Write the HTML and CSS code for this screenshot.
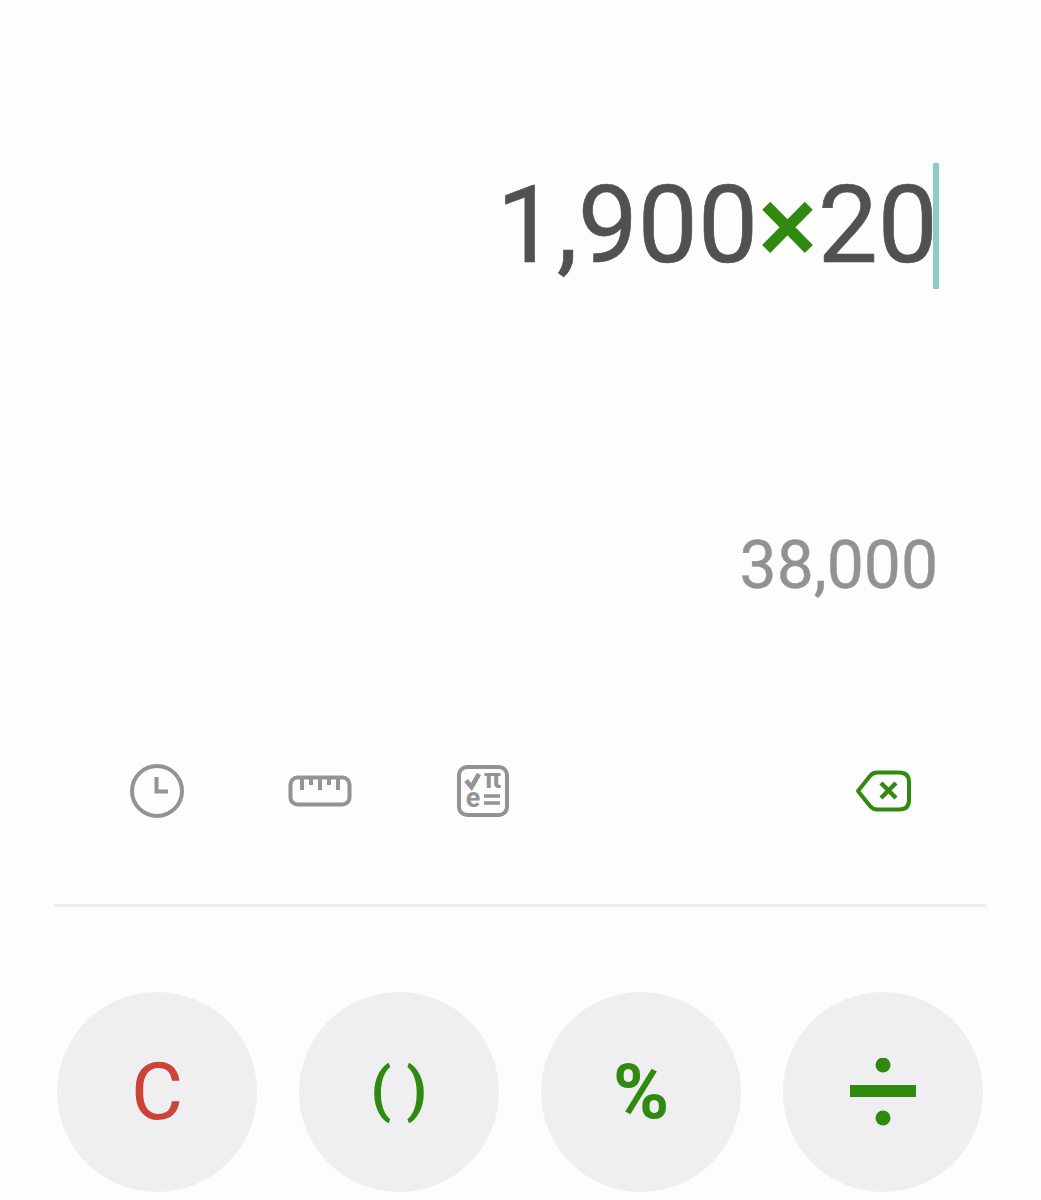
FILE: index.html
```html
<!DOCTYPE html>
<html lang="en">
<head>
    <meta charset="UTF-8">
    <meta name="viewport" content="width=device-width, initial-scale=1.0">
    <title>Calculator</title>
    <link rel="stylesheet" href="styles.css">
</head>
<body>
    <div id="calculator">
        <div id="expression">
            <span>1,900</span><span class="times">×</span><span>20</span><span class="caret"></span>
        </div>
        <div id="result">38,000</div>

        <div id="tools">
            <button class="tool">
                <svg width="56" height="56" viewBox="0 0 56 56" fill="none" stroke="#939393" stroke-width="4">
                    <circle cx="28" cy="28" r="25"/>
                    <path d="M27.500 14V28.500H39"/>
                </svg>
            </button>
            <button class="tool">
                <svg width="64" height="32" viewBox="0 0 64 32" fill="none" stroke="#939393" stroke-width="4">
                    <rect x="2.500" y="2.500" width="59" height="27" rx="7"/>
                    <path d="M14 3V15M23 3V10M32 3V15M41 3V10M50 3V15"/>
                </svg>
            </button>
            <button class="tool">
                <svg width="52" height="64" viewBox="0 -6 52 64" fill="none" stroke="#939393" stroke-width="4">
                    <rect x="2" y="2" width="48" height="48" rx="8"/>
                    <path d="M9 15.500L14.500 22L22 9" stroke-width="4.600"/>
                    <path d="M27 31H43M27 38H43" stroke-width="3.600"/>
                    <text x="35.500" y="23" class="sym">π</text>
                    <text x="16" y="42" class="sym">e</text>
                </svg>
            </button>
            <button class="tool back">
                <svg width="56" height="42" viewBox="0 0 56 42" fill="none" stroke="#318a10" stroke-width="4">
                    <path d="M3 21L15 6Q18 2.500 22 2.500H44Q54 2.500 54 12V30Q54 39.500 44 39.500H22Q18 39.500 15 36Z" stroke-linejoin="round"/>
                    <path d="M26 13L41 28M41 13L26 28" stroke-width="4.400"/>
                </svg>
            </button>
        </div>

        <div id="divider"></div>

        <div id="buttons">
            <button class="key clear">C</button>
            <button class="key operator paren">( )</button>
            <button class="key operator percent">%</button>
            <button class="key operator">
                <svg width="66" height="68" viewBox="0 0 66 68" fill="#318a10">
                    <circle cx="33" cy="7" r="7.500"/>
                    <rect x="0" y="27" width="66" height="12"/>
                    <circle cx="33" cy="60" r="7.500"/>
                </svg>
            </button>
        </div>
    </div>
</body>
</html>
```

FILE: styles.css
```css
body {
    font-family: Roboto, "Liberation Sans", sans-serif;
    margin: 0;
    background: #fdfdfd;
    color: #515153;
    height: 1200px;
    overflow: hidden;
}

#calculator {
    padding-top: 163px;
}

#expression {
    display: flex;
    justify-content: flex-end;
    align-items: center;
    height: 126px;
    padding-right: 102px;
    font-size: 107px;
    line-height: 126px;
    white-space: nowrap;
    -webkit-text-stroke: 0.6px #515153;
}

.times {
    color: #318a10;
    font-size: 112px;
    font-weight: 500;
    line-height: 126px;
    -webkit-text-stroke: 0;
}

.caret {
    width: 6px;
    height: 126px;
    margin-left: -5px;
    background: #8ccbc6;
}

#result {
    margin-top: 237px;
    padding-right: 103px;
    text-align: right;
    font-size: 66px;
    line-height: 80px;
    color: #929292;
    -webkit-text-stroke: 0.4px #929292;
}

#tools {
    display: flex;
    align-items: center;
    height: 64px;
    margin-top: 153px;
    padding: 0 76px 0 75px;
}

.tool {
    display: flex;
    justify-content: center;
    align-items: center;
    width: 163px;
    height: 64px;
    padding: 0;
    background: none;
    border: none;
}

.tool.back {
    width: 164px;
    margin-left: auto;
}

.sym {
    font-family: Roboto, sans-serif;
    font-size: 27px;
    font-weight: 700;
    fill: #939393;
    stroke: none;
    text-anchor: middle;
}

#divider {
    height: 3px;
    margin: 81px 54px 0;
    background: #eeeeee;
}

#buttons {
    display: grid;
    grid-template-columns: repeat(4, 200px);
    gap: 42px;
    margin-top: 85px;
    padding-left: 57px;
}

.key {
    display: flex;
    justify-content: center;
    align-items: center;
    width: 200px;
    height: 200px;
    padding: 0;
    background: #efeff1;
    border: none;
    border-radius: 50%;
    font-family: Roboto, sans-serif;
    font-size: 80px;
}

.clear {
    color: #cc4439;
}

.operator {
    color: #318a10;
}

.paren {
    padding-bottom: 6px;
    font-size: 60px;
    font-weight: 600;
}

.percent {
    font-size: 76px;
    font-weight: 700;
}
```
